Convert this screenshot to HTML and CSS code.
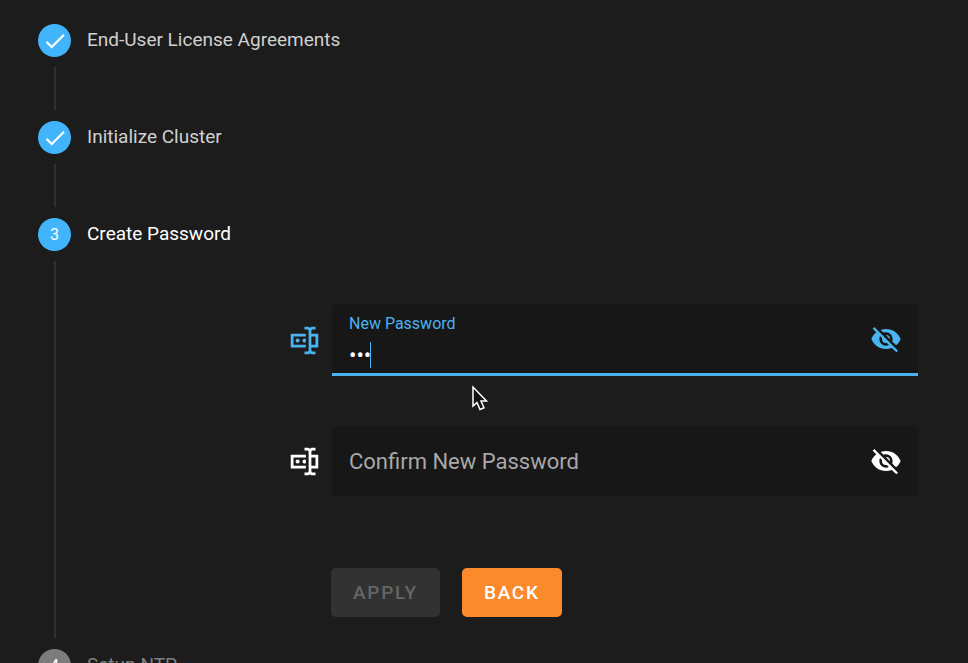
FILE: index.html
```html
<!DOCTYPE html>
<html lang="en">
<head>
<meta charset="utf-8">
<title>Cluster Setup</title>
<link rel="stylesheet" href="styles.css">
</head>
<body>
<svg class="defs" aria-hidden="true">
  <symbol id="check" viewBox="0 0 24 24"><path d="M21 7 9 19l-5.500-5.500 1.410-1.410L9 16.170 19.590 5.590 21 7z"/></symbol>
  <symbol id="textbox" viewBox="0 0 24 24"><path d="M17,7H22V17H17V19A1,1 0 0,0 18,20H20V22H17.5C16.95,22 16,21.55 16,21C16,21.55 15.05,22 14.5,22H12V20H14A1,1 0 0,0 15,19V5A1,1 0 0,0 14,4H12V2H14.5C15.05,2 16,2.45 16,3C16,2.45 16.95,2 17.5,2H20V4H18A1,1 0 0,0 17,5V7M2,7H13V9H4V15H13V17H2V7M20,15V9H17V15H20M8.5,12A1.5,1.5 0 0,0 7,10.5A1.5,1.5 0 0,0 5.500,12A1.5,1.5 0 0,0 7,13.5A1.5,1.5 0 0,0 8.5,12M13,10.89C12.39,10.33 11.44,10.38 10.88,11C10.32,11.6 10.37,12.55 11,13.11C11.55,13.63 12.43,13.63 13,13.11V10.89Z"/></symbol>
  <symbol id="eye-off" viewBox="0 0 24 24"><path d="M11.83,9L15,12.16C15,12.11 15,12.05 15,12A3,3 0 0,0 12,9C11.94,9 11.89,9 11.83,9M7.53,9.8L9.08,11.35C9.03,11.56 9,11.77 9,12A3,3 0 0,0 12,15C12.22,15 12.44,14.97 12.65,14.92L14.2,16.47C13.53,16.8 12.79,17 12,17A5,5 0 0,1 7,12C7,11.21 7.2,10.47 7.53,9.8M2,4.27L4.28,6.55L4.73,7C3.08,8.3 1.78,10 1,12C2.73,16.39 7,19.5 12,19.5C13.55,19.5 15.03,19.2 16.38,18.66L16.81,19.08L19.73,22L21,20.73L3.27,3M12,7A5,5 0 0,1 17,12C17,12.64 16.87,13.26 16.64,13.82L19.57,16.75C21.07,15.5 22.27,13.86 23,12C21.27,7.61 17,4.5 12,4.5C10.6,4.5 9.26,4.75 8,5.2L10.17,7.35C10.74,7.13 11.35,7 12,7Z"/></symbol>
</svg>
<main class="stepper">
  <section class="step">
    <div class="rail"><span class="badge"><svg class="check"><use href="#check"/></svg></span><span class="line"></span></div>
    <h2 class="title">End-User License Agreements</h2>
  </section>
  <section class="step">
    <div class="rail"><span class="badge"><svg class="check"><use href="#check"/></svg></span><span class="line"></span></div>
    <h2 class="title">Initialize Cluster</h2>
  </section>
  <section class="step active">
    <div class="rail"><span class="badge">3</span><span class="line"></span></div>
    <div class="content">
      <h2 class="title">Create Password</h2>
      <form class="form">
        <div class="row focused">
          <svg class="prefix"><use href="#textbox"/></svg>
          <div class="field">
            <div class="entry">
              <label for="new-password">New Password</label>
              <div class="value"><input id="new-password" type="password" value="abc"><span class="caret"></span></div>
            </div>
            <button class="toggle" type="button" aria-label="Show password"><svg><use href="#eye-off"/></svg></button>
          </div>
          <svg class="pointer" viewBox="0 0 18 28"><path d="M2 2v19l4-3.500 3 7 4-1.700-3-6.800h5.500z"/></svg>
        </div>
        <div class="row">
          <svg class="prefix"><use href="#textbox"/></svg>
          <div class="field">
            <input id="confirm-password" type="password" placeholder="Confirm New Password" aria-label="Confirm New Password">
            <button class="toggle" type="button" aria-label="Show password"><svg><use href="#eye-off"/></svg></button>
          </div>
        </div>
        <div class="actions">
          <button class="btn" type="submit" disabled>APPLY</button>
          <button class="btn back" type="button">BACK</button>
        </div>
      </form>
    </div>
  </section>
  <section class="step pending">
    <div class="rail"><span class="badge">4</span></div>
    <h2 class="title">Setup NTP</h2>
  </section>
</main>
</body>
</html>
```

FILE: styles.css
```css
* { box-sizing: border-box; }
body {
  margin: 0;
  background: #1c1c1c;
  color: #fff;
  font-family: Roboto, "Liberation Sans", sans-serif;
}
.defs { display: none; }
svg { fill: currentColor; }
button, input { font: inherit; color: inherit; }
.stepper {
  height: 100vh;
  overflow: hidden;
  padding: 24px 50px 0 38px;
}
.step {
  display: flex;
  gap: 15px;
  min-height: 97px;
}
.rail {
  display: flex;
  flex: none;
  flex-direction: column;
  align-items: center;
  gap: 10px;
  width: 34px;
  padding-bottom: 11px;
}
.badge {
  display: flex;
  flex: none;
  align-items: center;
  align-self: flex-start;
  justify-content: center;
  width: 33px;
  height: 33px;
  border-radius: 50%;
  background: #42b4fc;
  font-size: 16px;
}
.check { width: 26px; height: 26px; }
.line {
  flex: 1;
  width: 2px;
  background: #303030;
}
.title {
  margin: 0;
  color: #d0d0d0;
  font-size: 19px;
  font-weight: 400;
  line-height: 32px;
}
.active .title { color: #fff; }
.content { flex: 1; min-width: 0; }
.form {
  display: flex;
  flex-direction: column;
  gap: 50px;
  padding: 54px 0 32px 201px;
}
.row {
  position: relative;
  display: flex;
  align-items: center;
  gap: 11px;
}
.prefix { flex: none; width: 33px; height: 33px; }
.focused { color: #4ab4f0; }
.field {
  display: flex;
  flex: 1;
  align-items: center;
  gap: 12px;
  min-width: 0;
  height: 70px;
  padding: 0 16px 0 17px;
  border-radius: 6px 6px 0 0;
  background: #171717;
}
.focused .field {
  height: 72px;
  border-bottom: 3px solid #4ab4f0;
}
.entry { flex: 1; min-width: 0; padding-top: 8px; }
label { display: block; font-size: 16px; line-height: 20px; }
.value { position: relative; padding-top: 5px; }
input {
  display: block;
  flex: 1;
  width: 100%;
  min-width: 0;
  height: 32px;
  padding: 0;
  border: 0;
  outline: 0;
  background: none;
  font-size: 22px;
}
.value input { color: #fff; }
input::placeholder { color: #a8a8a8; opacity: 1; }
.caret {
  position: absolute;
  top: 8px;
  left: 21px;
  width: 1px;
  height: 26px;
  background: #4ab4f0;
}
.toggle {
  flex: none;
  padding: 0;
  border: 0;
  background: none;
}
.toggle svg { display: block; width: 32px; height: 32px; }
.pointer {
  position: absolute;
  top: 81px;
  left: 183px;
  width: 18px;
  height: 28px;
  fill: #111;
  stroke: #fff;
  stroke-width: 1.5;
}
.actions { display: flex; gap: 22px; padding: 22px 0 0 43px; }
.btn {
  height: 49px;
  padding: 0 22px;
  border: 0;
  border-radius: 5px;
  background: #323232;
  color: #656565;
  font-size: 19px;
  font-weight: 500;
  letter-spacing: 0.09em;
}
.back { background: #fa8a2c; color: #fff; }
.pending .badge { background: #7c7c7c; }
.pending .title { color: #808080; }
```
